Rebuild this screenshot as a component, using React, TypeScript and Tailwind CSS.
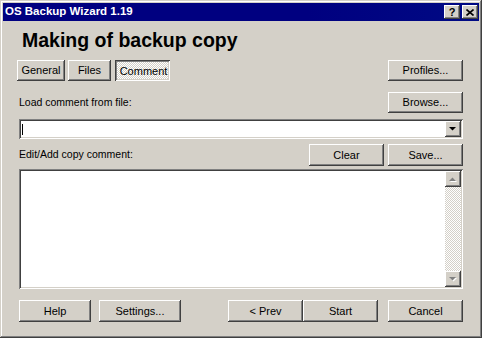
import React from 'react';

const raised =
  'shadow-[inset_-1px_-1px_0_#404040,inset_1px_1px_0_#ffffff,inset_-2px_-2px_0_#808080,inset_2px_2px_0_#d4d0c8]';
const pressed =
  'shadow-[inset_1px_1px_0_#404040,inset_-1px_-1px_0_#ffffff,inset_2px_2px_0_#808080,inset_-2px_-2px_0_#d4d0c8]';
const sunken =
  'shadow-[inset_1px_1px_0_#808080,inset_-1px_-1px_0_#ffffff,inset_2px_2px_0_#404040,inset_-2px_-2px_0_#d4d0c8]';
const dither = 'bg-[image:repeating-conic-gradient(#ffffff_0%_25%,#d4d0c8_0%_50%)] bg-[length:2px_2px]';

function Btn({ label, w, h = 21, active = false }: { label: string; w: number; h?: number; active?: boolean }) {
  return (
    <div
      className={`flex items-center justify-center shrink-0 text-[11px] text-black ${active ? `${pressed} ${dither}` : `${raised} bg-[#d4d0c8]`}`}
      style={{ width: w, height: h }}
    >
      <span className={active ? 'translate-x-[1px] translate-y-[1px]' : ''}>{label}</span>
    </div>
  );
}

function Arrow({ up, color = '#000000', shade = false }: { up?: boolean; color?: string; shade?: boolean }) {
  const pts = up ? '0,4 7,4 3.5,0.5' : '0,0 7,0 3.5,3.5';
  return (
    <svg width="8" height="5" viewBox="0 0 8 5">
      {shade && <polygon points={pts} fill="#ffffff" transform="translate(1,1)" />}
      <polygon points={pts} fill={color} />
    </svg>
  );
}

export default function App() {
  return (
    <div className="w-[482px] h-[338px] bg-[#d4d0c8] p-[3px] flex flex-col font-['Liberation_Sans',Arial,sans-serif] shadow-[inset_-1px_-1px_0_#404040,inset_1px_1px_0_#d4d0c8,inset_-2px_-2px_0_#808080,inset_2px_2px_0_#ffffff]">
      {/* title bar */}
      <div className="h-[18px] bg-[linear-gradient(to_right,#000080,#000080_64%,#000a84)] flex items-center pl-[2px] pr-[1px]">
        <span className="text-white font-bold text-[11.5px] leading-none flex-1">OS Backup Wizard 1.19</span>
        <div className={`${raised} bg-[#d4d0c8] w-[16px] h-[14px] flex items-center justify-center text-[11px] font-bold leading-none`}>?</div>
        <div className={`${raised} bg-[#d4d0c8] w-[16px] h-[14px] ml-[2px] flex items-center justify-center`}>
          <svg width="8" height="7" viewBox="0 0 8 7">
            <path d="M0.5 0.5 L7.5 6.5 M7.5 0.5 L0.5 6.5" stroke="#000" strokeWidth="1.6" />
          </svg>
        </div>
      </div>

      <div className="flex flex-col px-[16px] text-[10.5px] text-black">
        <div className="mt-[8px] h-[22px] leading-[22px] pl-[3px] text-[19.5px] font-bold">Making of backup copy</div>

        <div className="mt-[9px] flex items-center">
          <div className="flex items-center gap-[3px] -ml-[2px]">
            <Btn label="General" w={48} />
            <Btn label="Files" w={43} />
            <div className="ml-[1px]">
              <Btn label="Comment" w={55} active />
            </div>
          </div>
          <div className="flex-1" />
          <Btn label="Profiles..." w={75} />
        </div>

        <div className="mt-[11px] flex items-center">
          <span className="flex-1">Load comment from file:</span>
          <Btn label="Browse..." w={75} />
        </div>

        <div className={`mt-[6px] h-[20px] bg-white ${sunken} p-[2px] flex`}>
          <div className="flex-1 flex items-center pl-[1px]">
            <div className="w-[1px] h-[11px] bg-black" />
          </div>
          <div className={`${raised} bg-[#d4d0c8] w-[16px] h-[16px] flex items-center justify-center`}>
            <Arrow />
          </div>
        </div>

        <div className="mt-[5px] flex items-center">
          <span className="flex-1">Edit/Add copy comment:</span>
          <Btn label="Clear" w={75} h={22} />
          <div className="w-[4px]" />
          <Btn label="Save..." w={75} h={22} />
        </div>

        <div className={`mt-[3px] h-[120px] bg-white ${sunken} p-[2px] flex`}>
          <div className="flex-1" />
          <div className="w-[16px] flex flex-col">
            <div className={`${raised} bg-[#d4d0c8] h-[16px] flex items-center justify-center`}>
              <Arrow up color="#808080" shade />
            </div>
            <div className={`flex-1 ${dither}`} />
            <div className={`${raised} bg-[#d4d0c8] h-[16px] flex items-center justify-center`}>
              <Arrow color="#808080" shade />
            </div>
          </div>
        </div>

        <div className="mt-[11px] flex items-center">
          <Btn label="Help" w={72} h={22} />
          <div className="w-[8px]" />
          <Btn label="Settings..." w={82} h={22} />
          <div className="flex-1" />
          <Btn label="< Prev" w={75} h={22} />
          <Btn label="Start" w={75} h={22} />
          <div className="w-[10px]" />
          <Btn label="Cancel" w={75} h={22} />
        </div>
      </div>
    </div>
  );
}
